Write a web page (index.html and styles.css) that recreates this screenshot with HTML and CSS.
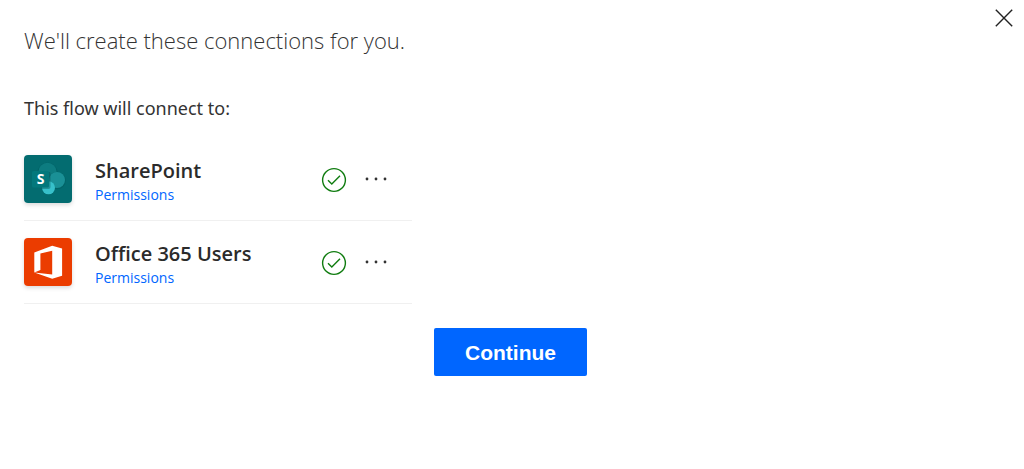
FILE: index.html
```html
<!DOCTYPE html>
<html lang="en">
<head>
<meta charset="utf-8">
<meta name="viewport" content="width=device-width, initial-scale=1">
<title>Create connections</title>
<link rel="stylesheet" href="styles.css">
</head>
<body>
<main class="dialog">
  <header class="dialog-header">
    <h1 class="title">We'll create these connections for you.</h1>
    <button class="close" type="button" aria-label="Close">
      <svg width="18" height="18" viewBox="0 0 18 18" aria-hidden="true"><path d="M.8.8l16.400 16.400M17.200.8L.8 17.200" stroke="#222" stroke-width="1.400"/></svg>
    </button>
  </header>
  <h2 class="subtitle">This flow will connect to:</h2>
  <ul class="connections">
    <li class="connection">
      <svg class="logo" viewBox="0 0 48 48" aria-hidden="true">
        <rect width="48" height="48" fill="#036c70"/>
        <circle cx="23.500" cy="17.500" r="10" fill="#025c60" opacity=".5"/>
        <circle cx="23.500" cy="17" r="9.200" fill="#0d7c80"/>
        <circle cx="33" cy="25.500" r="8.800" fill="#025c60" opacity=".5"/>
        <circle cx="33" cy="25" r="8" fill="#1a9096"/>
        <circle cx="24.500" cy="32.800" r="6.500" fill="#37c0ca"/>
        <path d="M18 17h7.500q1 0 1 1.500V32q0 2-2 2H18z" fill="#024d50" opacity=".4"/>
        <rect x="8" y="16" width="17" height="16.500" rx="1.500" fill="#03787c"/>
        <text class="logo-letter" x="16.500" y="29" text-anchor="middle">S</text>
      </svg>
      <div class="info">
        <h3 class="name">SharePoint</h3>
        <a class="permissions" href="#">Permissions</a>
      </div>
      <svg class="status" viewBox="0 0 26 26" role="img" aria-label="Connected"><g fill="none" stroke="#107c10" stroke-width="1.400"><circle cx="13" cy="13" r="11.400"/><path d="M7 13.300l3.800 3.800 8.200-8.300"/></g></svg>
      <button class="more" type="button" aria-label="More options for SharePoint">
        <svg width="22" height="4" viewBox="0 0 22 4" fill="#333" aria-hidden="true"><circle cx="2" cy="2" r="1.400"/><circle cx="11" cy="2" r="1.400"/><circle cx="20" cy="2" r="1.400"/></svg>
      </button>
    </li>
    <li class="connection">
      <svg class="logo" viewBox="0 0 48 48" aria-hidden="true">
        <rect width="48" height="48" fill="#eb3c00"/>
        <path d="M10.300 34.500V14.600L28.200 7.800l9.900 2.700v27.300l-9.900 3-17.900-6.300 17.900 2V12.700l-11.800 2.900v16.300z" fill="#fff"/>
      </svg>
      <div class="info">
        <h3 class="name">Office 365 Users</h3>
        <a class="permissions" href="#">Permissions</a>
      </div>
      <svg class="status" viewBox="0 0 26 26" role="img" aria-label="Connected"><g fill="none" stroke="#107c10" stroke-width="1.400"><circle cx="13" cy="13" r="11.400"/><path d="M7 13.300l3.800 3.800 8.200-8.300"/></g></svg>
      <button class="more" type="button" aria-label="More options for Office 365 Users">
        <svg width="22" height="4" viewBox="0 0 22 4" fill="#333" aria-hidden="true"><circle cx="2" cy="2" r="1.400"/><circle cx="11" cy="2" r="1.400"/><circle cx="20" cy="2" r="1.400"/></svg>
      </button>
    </li>
  </ul>
  <footer class="actions">
    <button class="continue" type="button">Continue</button>
  </footer>
</main>
</body>
</html>
```
FILE: styles.css
```css
* { box-sizing: border-box; }

body {
  margin: 0;
  background: #fff;
  color: #333;
  font-family: "Open Sans", "Noto Sans", sans-serif;
}

h1, h2, h3, ul { margin: 0; padding: 0; }

button {
  border: 0;
  padding: 0;
  background: none;
  cursor: pointer;
}

.dialog { padding: 0 0 24px 24px; }

.dialog-header {
  display: flex;
  justify-content: space-between;
  align-items: flex-start;
}

.title {
  padding-top: 24px;
  font-size: 22px;
  font-weight: 300;
  line-height: 32px;
}

.close {
  display: flex;
  padding: 9px 11px;
}

.subtitle {
  padding-top: 40px;
  font-family: "Noto Sans", "Open Sans", sans-serif;
  font-size: 18px;
  font-weight: 400;
  line-height: 24px;
}

.connections {
  max-width: 388px;
  padding-top: 18px;
  list-style: none;
}

.connection {
  display: flex;
  align-items: center;
  padding: 17px 25px 17px 0;
  border-bottom: 1px solid #f0f0f0;
}

.logo {
  width: 48px;
  height: 48px;
  border-radius: 4px;
  box-shadow: 0 2px 4px rgba(0, 0, 0, .15);
}

.logo-letter {
  fill: #fff;
  font-family: "Open Sans", sans-serif;
  font-size: 14px;
  font-weight: 700;
}

.info {
  flex: 1;
  height: 48px;
  padding: 4px 0 0 23px;
}

.name {
  color: #2b2b2b;
  font-size: 20px;
  font-weight: 600;
  line-height: 24px;
}

.permissions {
  display: block;
  color: #06f;
  font-size: 14px;
  line-height: 24px;
  text-decoration: none;
}

.status {
  width: 26px;
  height: 26px;
  margin: 2px 18px 0 0;
}

.more { display: flex; }

.actions {
  display: flex;
  justify-content: center;
  padding: 24px 27px 0 0;
}

.continue {
  min-width: 153px;
  height: 48px;
  padding-top: 1px;
  border-radius: 2px;
  background: #06f;
  color: #fff;
  font-family: "Liberation Sans", Arial, sans-serif;
  font-size: 21px;
  font-weight: 700;
}
```
